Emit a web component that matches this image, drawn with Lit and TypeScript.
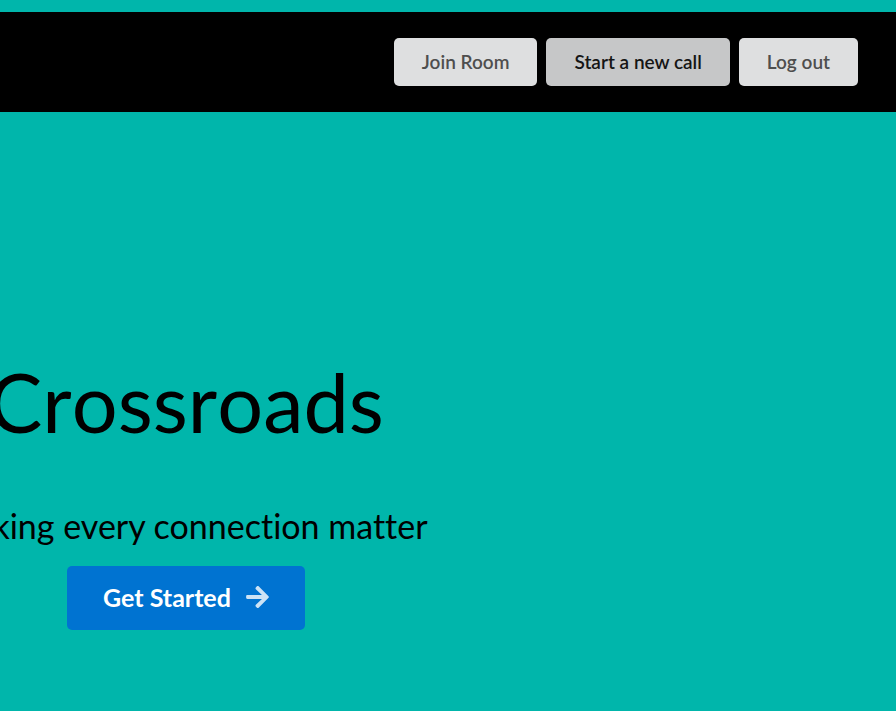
import { LitElement, html, css } from "lit";
import { customElement } from "lit/decorators.js";

@customElement("app-root")
export class AppRoot extends LitElement {
  static styles = css`
    :host {
      display: block;
      box-sizing: border-box;
      min-height: 100vh;
      padding-top: 12px;
      overflow: hidden;
      background: #00b6ab;
      color: #000;
      font-family: Lato, "Helvetica Neue", Arial, sans-serif;
      font-variant-ligatures: none;
    }
    button {
      border: 0;
      border-radius: 5px;
      font-family: inherit;
      font-weight: 700;
      font-variant-ligatures: inherit;
      white-space: nowrap;
      cursor: pointer;
    }
    .bar {
      display: flex;
      justify-content: flex-end;
      gap: 9px;
      padding: 26px 38px;
      background: #000;
    }
    .nav {
      height: 48px;
      padding: 0 28px 2px;
      background: #dedfe0;
      color: #4e4e4e;
      font-size: 19px;
      font-weight: 600;
    }
    .nav.active {
      background: #c6c7c8;
      color: #151515;
    }
    .hero {
      display: flex;
      flex-direction: column;
      align-items: center;
      padding: 237px 524px 80px 0;
      white-space: nowrap;
    }
    h1 {
      margin: 0;
      font-size: 81px;
      line-height: 106px;
      font-weight: 400;
      font-kerning: none;
    }
    h2 {
      margin: 48px 0 17px;
      font-size: 34px;
      line-height: 46px;
      font-weight: 400;
    }
    .start {
      display: flex;
      align-items: center;
      gap: 15px;
      height: 64px;
      padding: 0 36px 3px;
      background: #0073d1;
      color: #fff;
      font-size: 25px;
    }
    .arrow {
      width: 23px;
      height: 26px;
      fill: currentColor;
      opacity: 0.8;
    }
  `;

  render() {
    return html`
      <header>
        <nav class="bar">
          <button class="nav">Join Room</button>
          <button class="nav active">Start a new call</button>
          <button class="nav">Log out</button>
        </nav>
      </header>
      <main class="hero">
        <h1>Crossroads</h1>
        <h2>Making every connection matter</h2>
        <button class="start">
          Get Started
          <svg class="arrow" viewBox="0 0 448 512" aria-hidden="true">
            <path
              d="M190.500 66.900l22.200-22.200c9.400-9.400 24.600-9.400 33.900 0L441 239c9.400 9.400 9.400 24.600 0 33.900L246.600 467.300c-9.400 9.400-24.600 9.400-33.900 0l-22.200-22.200c-9.500-9.500-9.300-25 .4-34.300L311.400 296H24c-13.300 0-24-10.700-24-24v-32c0-13.300 10.700-24 24-24h287.400L190.900 101.200c-9.800-9.300-10-24.800-.4-34.300z"
            />
          </svg>
        </button>
      </main>
    `;
  }
}
